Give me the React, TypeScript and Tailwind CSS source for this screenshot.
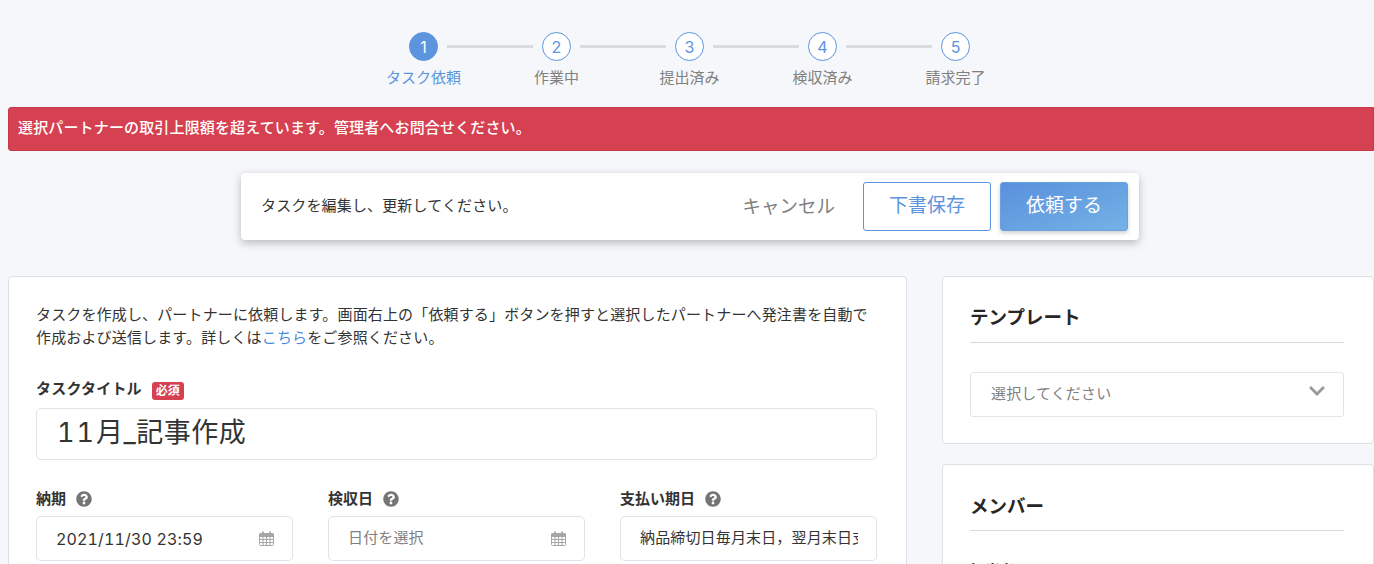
import { FaQuestionCircle, FaChevronDown } from 'react-icons/fa';

const steps = ['タスク依頼', '作業中', '提出済み', '検収済み', '請求完了'];

const CalendarIcon = () => (
    <svg viewBox="0 0 15 15" className="w-[15px] h-[15px] text-[#a6a6a6]" fill="none" stroke="currentColor" strokeWidth="1">
        <rect x="0.5" y="2.5" width="14" height="12" rx="1" />
        <path d="M0.5 3h14v2.5H0.5z" fill="currentColor" />
        <path d="M0.5 8.5h14M0.5 11.5h14M4 5.5v9M7.5 5.5v9M11 5.5v9" />
        <path d="M4 0.5v3M11 0.5v3" strokeWidth="1.8" />
    </svg>
);

const Stepper = () => (
    <div className="flex flex-col items-center pt-8 pl-[5px]">
        <div className="flex items-center">
            {steps.map((_, i) => (
                <div key={i} className="flex items-center">
                    <div
                        className={`flex items-center justify-center w-[29px] h-[29px] rounded-full border border-[#5c94de] text-[16px] ${
                            i === 0 ? 'bg-[#5c94de] text-white' : 'bg-white text-[#5c94de]'
                        }`}
                    >
                        {i + 1}
                    </div>
                    {i < 4 && <div className="w-[86px] h-[3px] mx-[9px] bg-[#d9dbdf]" />}
                </div>
            ))}
        </div>
        <div className="flex mt-[6px]">
            {steps.map((s, i) => (
                <div
                    key={s}
                    className={`w-[133px] text-center text-[15px] leading-[22px] ${i === 0 ? 'text-[#5c94de]' : 'text-[#808080]'}`}
                >
                    {s}
                </div>
            ))}
        </div>
    </div>
);

const ActionBar = () => (
    <div className="flex justify-center mt-[22px] pl-[6px]">
        <div className="flex items-center w-[898px] h-[67px] pl-5 pr-[11px] bg-white rounded shadow-[0_3px_8px_rgba(0,0,0,0.25)]">
            <p className="flex-1 text-[15px] tracking-[0.15px] text-[#333333]">タスクを編集し、更新してください。</p>
            <span className="mr-[28px] text-[18.5px] text-[#808080]">キャンセル</span>
            <button className="w-[128px] h-[49px] mr-[9px] bg-white border border-[#5c94de] rounded-[3px] text-[19px] text-[#5c94de]">
                下書保存
            </button>
            <button className="w-[128px] h-[49px] bg-gradient-to-br from-[#5a90dc] to-[#74b2e6] border border-[#6aa2e0] rounded-[3px] shadow-[0_2px_4px_rgba(0,0,0,0.2)] text-[19px] text-white">
                依頼する
            </button>
        </div>
    </div>
);

const Label = ({ text }: { text: string }) => (
    <div className="flex items-center h-[18px] gap-[10px] text-[15px] font-bold text-[#333333]">
        {text}
        <FaQuestionCircle className="w-4 h-4 text-[#757575]" />
    </div>
);

const DateField = ({ value, placeholder }: { value?: string; placeholder?: string }) => (
    <div className="flex items-center justify-between h-[45px] mt-2 pl-[19px] pr-[18px] border border-[#dfe4ea] rounded-[5px] bg-white">
        {value ? (
            <span className="text-[16px] tabular-nums tracking-[0.15px] text-[#333333]">{value}</span>
        ) : (
            <span className="text-[15px] tracking-[0.15px] text-[#808080]">{placeholder}</span>
        )}
        <CalendarIcon />
    </div>
);

const MainCard = () => (
    <div className="w-[899px] h-[320px] shrink-0 px-[27px] pt-[26px] bg-white border border-[#dcdfe4] rounded">
        <p className="text-[15px] tracking-[0.15px] leading-[23px] text-[#333333]">
            タスクを作成し、パートナーに依頼します。画面右上の「依頼する」ボタンを押すと選択したパートナーへ発注書を自動で
            <br />
            作成および送信します。詳しくは<span className="text-[#4a8ade]">こちら</span>をご参照ください。
        </p>
        <div className="flex items-center h-[18px] gap-[10px] mt-[31px] text-[15px] tracking-[0.2px] font-bold text-[#333333]">
            タスクタイトル
            <span className="flex items-center justify-center w-[32px] h-[18px] mt-1 bg-[#d64152] rounded-[3px] text-[12px] tracking-normal text-white">
                必須
            </span>
        </div>
        <div className="flex items-center w-[841px] h-[52px] mt-[10px] pl-5 pb-[2px] border border-[#dfe4ea] rounded-[5px] text-[27px] tracking-[0.5px] text-[#333333]">
            <span className="tabular-nums tracking-[2px]">11</span>月_記事作成
        </div>
        <div className="grid grid-cols-3 gap-x-[35px] w-[841px] mt-[30px]">
            <div>
                <Label text="納期" />
                <DateField value="2021/11/30 23:59" />
            </div>
            <div>
                <Label text="検収日" />
                <DateField placeholder="日付を選択" />
            </div>
            <div>
                <Label text="支払い期日" />
                <div className="flex items-center h-[45px] mt-2 pl-[19px] pr-[18px] border border-[#dfe4ea] rounded-[5px]">
                    <span className="overflow-hidden whitespace-nowrap text-[15px] tracking-[0.15px] text-[#333333]">
                        納品締切日毎月末日，翌月末日支払い
                    </span>
                </div>
            </div>
        </div>
    </div>
);

const SideColumn = () => (
    <div className="flex flex-col gap-[20px] flex-1">
        <div className="h-[168px] pl-[27px] pr-[29px] pt-[26px] bg-white border border-[#dcdfe4] rounded">
            <h2 className="h-[28px] text-[18.5px] leading-[28px] font-bold text-[#262626]">テンプレート</h2>
            <div className="h-px mt-[11px] bg-[#d9d9d9]" />
            <div className="flex items-center justify-between h-[45px] mt-[29px] pl-5 pr-[17px] border border-[#e3e5e8] rounded-[3px]">
                <span className="pb-[1px] text-[15px] tracking-[0.15px] text-[#808080]">選択してください</span>
                <FaChevronDown className="w-[18px] h-[18px] mb-[7px] text-[#999999]" />
            </div>
        </div>
        <div className="h-[200px] pl-[27px] pr-[29px] pt-[27px] bg-white border border-[#dcdfe4] rounded">
            <h2 className="h-[28px] text-[18.5px] leading-[28px] font-bold text-[#262626]">メンバー</h2>
            <div className="h-px mt-[10px] bg-[#d9d9d9]" />
            <p className="mt-[29px] text-[15px] font-bold text-[#333333]">担当者</p>
        </div>
    </div>
);

export default function App() {
    return (
        <div className="h-[564px] overflow-hidden bg-[#f5f7fb] font-['Inter','Noto_Sans_CJK_JP',sans-serif]">
            <Stepper />
            <div className="flex items-center h-[44px] ml-2 mt-[18px] pl-[9px] pb-[2px] bg-[#d64152] border border-[#c23a4a] rounded-l-[3px] text-[15px] tracking-[0.15px] font-medium text-white">
                選択パートナーの取引上限額を超えています。管理者へお問合せください。
            </div>
            <ActionBar />
            <div className="flex items-start gap-[35px] mt-9 ml-2">
                <MainCard />
                <SideColumn />
            </div>
        </div>
    );
}
